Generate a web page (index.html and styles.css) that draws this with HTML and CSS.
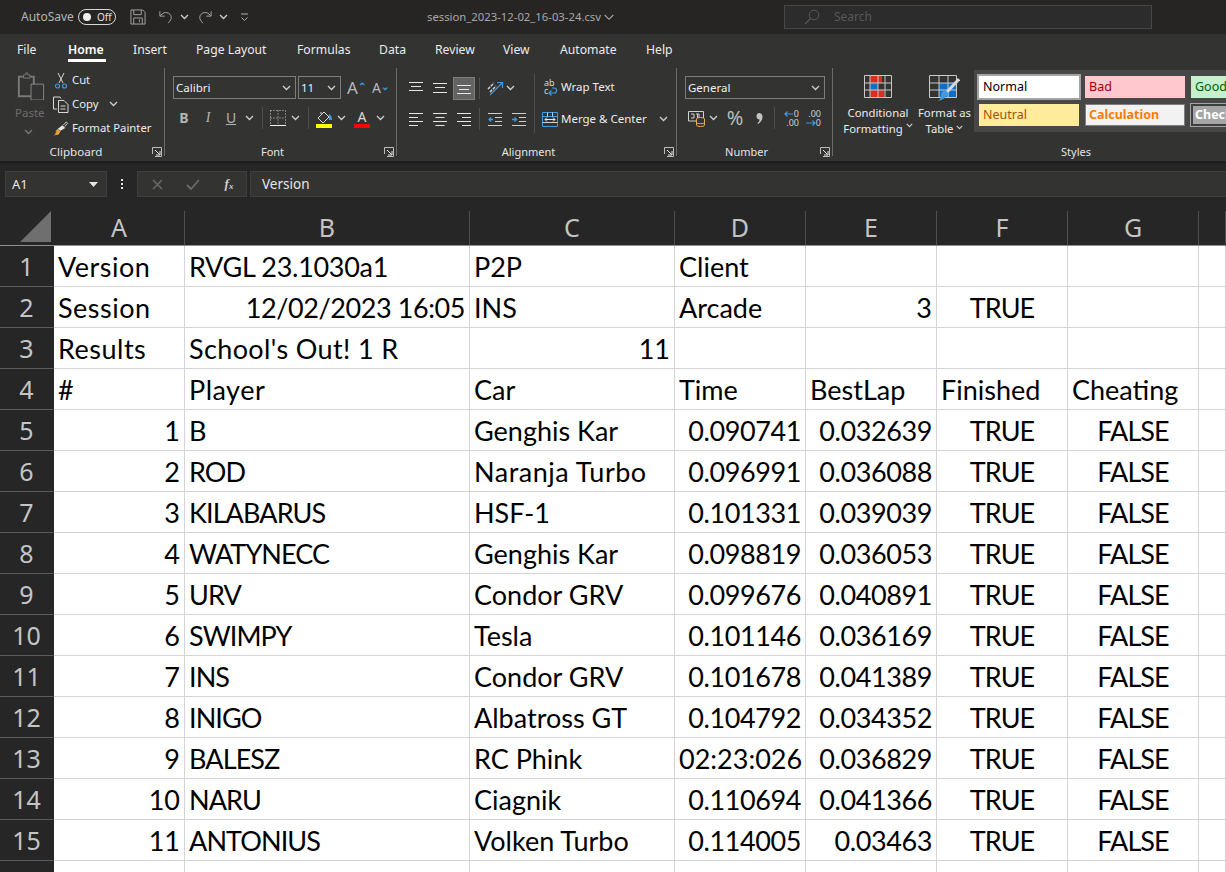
FILE: index.html
```html
<!DOCTYPE html>
<html lang="en">
<head>
<meta charset="utf-8">
<title>session_2023-12-02_16-03-24.csv - Excel</title>
<link rel="stylesheet" href="styles.css">
</head>
<body>
<svg class="defs" width="0" height="0" aria-hidden="true">
  <symbol id="chev" viewBox="0 0 9 6"><path d="M1 1l3.5 3.5L8 1" fill="none" stroke="#d0d0d0" stroke-width="1.3"/></symbol>
  <symbol id="launch" viewBox="0 0 10 10"><path d="M.5 7V.5H9.500V9.500H3" fill="none" stroke="#bdbdbd"/><path d="M3 3l4.500 4.500M8 4v4H4" fill="none" stroke="#e6e6e6"/></symbol>
</svg>
<header class="titlebar">
  <span class="autosave">AutoSave</span>
  <span class="toggle"><i class="knob"></i><span>Off</span></span>
  <svg class="t-save" width="16" height="16" viewBox="0 0 17 17"><path d="M1 1h12.500L16 3.500V16H1zM4 1v5h8V1M4 16V9.500h9V16M10 11v3" fill="none" stroke="#a8a8a8"/></svg>
  <svg class="t-undo" width="14" height="16" viewBox="0 0 16 17"><path d="M1 2v5.500h5.500M1.500 7C4 4 6.500 3 9 3.500c3 .6 5 3 5 5.500 0 2-1 3.500-3.500 6.500" fill="none" stroke="#a8a8a8" stroke-width="1.1"/></svg>
  <svg class="chev c-undo" width="9" height="6"><use href="#chev"/></svg>
  <svg class="t-redo" width="14" height="16" viewBox="0 0 16 17"><path d="M15 2v5.500H9.500M14.500 7C12 4 9.500 3 7 3.500 4 4.100 2 6.500 2 9c0 2 1 3.500 3.500 6.500" fill="none" stroke="#a8a8a8" stroke-width="1.1"/></svg>
  <svg class="chev c-redo" width="9" height="6"><use href="#chev"/></svg>
  <svg class="t-cust" width="9" height="9" viewBox="0 0 9 9"><path d="M1 1h7M1.500 4.500L4.500 7.500 7.500 4.500" fill="none" stroke="#b0b0b0"/></svg>
  <span class="doc">session_2023-12-02_16-03-24.csv</span>
  <svg class="c-doc" width="10" height="7" viewBox="0 0 10 7"><path d="M.7 1l4.300 4.300L9.300 1" fill="none" stroke="#a8a8a8" stroke-width="1.1"/></svg>
  <div class="search">
    <svg width="16" height="16" viewBox="0 0 16 16"><circle cx="10" cy="6" r="4.800" fill="none" stroke="#585858"/><path d="M6.500 9.500L1 15" stroke="#585858" stroke-width="1.2"/></svg>
    <span>Search</span>
  </div>
</header>

<nav class="tabs">
  <a class="t-file">File</a>
  <a class="t-home">Home</a>
  <a class="t-insert">Insert</a>
  <a class="t-page">Page Layout</a>
  <a class="t-form">Formulas</a>
  <a class="t-data">Data</a>
  <a class="t-rev">Review</a>
  <a class="t-view">View</a>
  <a class="t-auto">Automate</a>
  <a class="t-help">Help</a>
</nav>

<section class="ribbon">
  <div class="group g-clip">
    <div class="body clip-body">
      <div class="paste">
        <svg width="28" height="28" viewBox="0 0 28 30"><path d="M1 5h16v21H1z" fill="none" stroke="#7a7a7a" stroke-width="2"/><path d="M6 5V3h2.500V1h2v2H13v3.500H6z" fill="#333" stroke="#7a7a7a"/><path d="M14 13h13.500v17H14z" fill="#333" stroke="#8a8a8a"/></svg>
        <span>Paste</span>
        <svg class="chev dim" width="9" height="6"><use href="#chev"/></svg>
      </div>
      <div class="clip-rows">
        <div class="clip-row">
          <svg class="ci" width="16" height="17" viewBox="0 0 16 17"><path d="M5 1l5 10M11 1L6 11" stroke="#d8d8d8" fill="none"/><circle cx="4.500" cy="14" r="2" fill="none" stroke="#3f9ae0" stroke-width="1.200"/><circle cx="11.500" cy="14" r="2" fill="none" stroke="#3f9ae0" stroke-width="1.200"/></svg>
          <span>Cut</span>
        </div>
        <div class="clip-row">
          <svg class="ci" width="16" height="17" viewBox="0 0 16 17"><path d="M4 13H.500V1H7l1 1.500M5.500 4.500H11l4 4V16.500H5.500z" fill="none" stroke="#d8d8d8"/><path d="M7.500 10h5M7.500 13h5" stroke="#d8d8d8"/></svg>
          <span>Copy</span>
          <svg class="chev c-copy" width="9" height="6"><use href="#chev"/></svg>
        </div>
        <div class="clip-row">
          <svg class="ci" width="17" height="17" viewBox="0 0 17 17"><path d="M10 5l3 3-5 3-3-2z" fill="#e6e6e6"/><path d="M5 9l3 2.500-2 3.500-5 1 2-2-1-.5 2-1.500-1.500-.500z" fill="#e8a33c"/><path d="M11 5l3-3.500 1.500 1.500-3 3.500" fill="none" stroke="#d8d8d8"/></svg>
          <span>Format Painter</span>
        </div>
      </div>
    </div>
    <footer class="foot"><span></span><span>Clipboard</span><svg class="launch" width="10" height="10"><use href="#launch"/></svg></footer>
  </div>
  <i class="vsep"></i>

  <div class="group g-font">
    <div class="body font-body">
      <div class="font-r1">
        <div class="select s-font"><span>Calibri</span><svg class="chev" width="9" height="6"><use href="#chev"/></svg></div>
        <div class="select s-size"><span>11</span><svg class="chev" width="9" height="6"><use href="#chev"/></svg></div>
        <span class="grow">A<b>⌃</b></span>
        <span class="shrink">A<b>⌄</b></span>
      </div>
      <div class="font-r2">
        <b class="fb">B</b><i class="fi">I</i><u class="fu">U</u>
        <svg class="chev" width="9" height="6"><use href="#chev"/></svg>
        <i class="sep"></i>
        <svg width="16" height="16" viewBox="0 0 16 16"><path d="M.5 .5h15M.5 8h15M8 .5v15M.5 .5v15M15.500 .5v15" fill="none" stroke="#d0d0d0" stroke-dasharray="1 2"/><path d="M0 15.500h16" stroke="#f2f2f2"/></svg>
        <svg class="chev" width="9" height="6"><use href="#chev"/></svg>
        <i class="sep"></i>
        <span class="swatch">
          <svg width="17" height="13" viewBox="0 0 17 13"><path d="M8 1l-6 6 5 5 6-6z" fill="none" stroke="#d8d8d8"/><path d="M5 3V1" stroke="#d8d8d8"/><path d="M13 3c2 1 3 3 3 6h-3z" fill="#3f9ae0"/></svg>
          <i class="bar yellow"></i>
        </span>
        <svg class="chev" width="9" height="6"><use href="#chev"/></svg>
        <span class="swatch">
          <span class="fa">A</span>
          <i class="bar red"></i>
        </span>
        <svg class="chev" width="9" height="6"><use href="#chev"/></svg>
      </div>
    </div>
    <footer class="foot"><span></span><span>Font</span><svg class="launch" width="10" height="10"><use href="#launch"/></svg></footer>
  </div>
  <i class="vsep"></i>

  <div class="group g-align">
    <div class="body align-body">
      <div class="align-left">
        <div class="al-row">
          <svg class="lines" width="14" height="14" viewBox="0 0 14 14"><path d="M0 1.500h14M2 5.500h10M0 9.500h14"/></svg>
          <svg class="lines" width="14" height="14" viewBox="0 0 14 14"><path d="M0 2.500h14M2 6.500h10M0 11.500h14"/></svg>
          <span class="active"><svg class="lines" width="14" height="14" viewBox="0 0 14 14"><path d="M0 4.500h14M2 8.500h10M0 12.500h14"/></svg></span>
          <i class="sep"></i>
          <svg width="17" height="17" viewBox="0 0 17 17"><path d="M1 9l6-6M3 12l6-6" stroke="#cfcfcf" fill="none" stroke-width="1.500" stroke-dasharray="3 1"/><path d="M3 15L15 3M10 2.500h5.500V8" stroke="#3f9ae0" fill="none" stroke-width="1.200"/></svg>
          <svg class="chev" width="9" height="6"><use href="#chev"/></svg>
        </div>
        <div class="al-row">
          <svg class="lines" width="14" height="13" viewBox="0 0 14 13"><path d="M0 .5h14M0 4.500h9M0 8.500h14M0 12.500h9"/></svg>
          <svg class="lines" width="14" height="13" viewBox="0 0 14 13"><path d="M0 .5h14M2.500 4.500h9M0 8.500h14M2.500 12.500h9"/></svg>
          <svg class="lines" width="14" height="13" viewBox="0 0 14 13"><path d="M0 .5h14M5 4.500h9M0 8.500h14M5 12.500h9"/></svg>
          <i class="sep"></i>
          <svg width="14" height="13" viewBox="0 0 14 13"><path d="M0 .5h14M7 4.500h7M7 8.500h7M0 12.500h14" stroke="#cfcfcf" fill="none"/><path d="M5 6.500H.8M3 4.500L1 6.500l2 2" stroke="#3f9ae0" fill="none" stroke-width="1.300"/></svg>
          <svg width="14" height="13" viewBox="0 0 14 13"><path d="M0 .5h14M7 4.500h7M7 8.500h7M0 12.500h14" stroke="#cfcfcf" fill="none"/><path d="M0 6.500h4.500M2.500 4.500l2 2-2 2" stroke="#3f9ae0" fill="none" stroke-width="1.300"/></svg>
        </div>
      </div>
      <div class="align-right">
        <div class="wrap-row">
          <span class="abc">
            <span class="abc-top">ab</span>
            <span class="abc-bot">c</span>
            <svg width="10" height="9" viewBox="0 0 10 9"><path d="M1 6h5c3.500 0 3.500-5 0-5H4M3.500 3.500L1 6l2.500 2.500" stroke="#3f9ae0" fill="none" stroke-width="1.200"/></svg>
          </span>
          <span>Wrap Text</span>
        </div>
        <div class="merge-row">
          <svg width="16" height="15" viewBox="0 0 16 15"><path d="M.5 .5h15v14H.5zM.5 4.500h15" fill="none" stroke="#3f9ae0"/><path d="M5.500 .5v4M10.500 .5v4M.5 10.500h15" fill="none" stroke="#cfcfcf"/><path d="M3 7.500h10M5 5.500l-2 2 2 2M11 5.500l2 2-2 2" fill="none" stroke="#e6e6e6"/></svg>
          <span>Merge &amp; Center</span>
          <svg class="chev" width="9" height="6"><use href="#chev"/></svg>
        </div>
      </div>
    </div>
    <footer class="foot"><span></span><span>Alignment</span><svg class="launch" width="10" height="10"><use href="#launch"/></svg></footer>
  </div>
  <i class="vsep"></i>

  <div class="group g-num">
    <div class="body num-body">
      <div class="select s-num"><span>General</span><svg class="chev" width="9" height="6"><use href="#chev"/></svg></div>
      <div class="num-r2">
        <svg width="17" height="17" viewBox="0 0 17 17"><path d="M.5 1.500h15v9.500H.5z" fill="none" stroke="#d0d0d0"/><path d="M3 4h3v4H3M8 4h3v4M9.500 4v4" fill="none" stroke="#d0d0d0"/><ellipse cx="12.500" cy="9" rx="4" ry="1.500" fill="#333" stroke="#e8b04a"/><path d="M8.500 9v6c0 2 8 2 8 0V9M8.500 12.500c0 1.500 8 1.500 8 0" fill="#333" stroke="#e8b04a"/></svg>
        <svg class="chev" width="9" height="6"><use href="#chev"/></svg>
        <span class="pct">%</span>
        <svg width="7" height="13" viewBox="0 0 7 13"><path d="M3 1c2 0 3.500 1.500 3.500 4 0 3-2 5.500-4.500 7l-.5-1c1.500-1 2-2 2-3.500C2 7.500.5 6.500.5 4.500.5 2.500 1.500 1 3 1z" fill="#c4c4c4"/></svg>
        <i class="sep"></i>
        <span class="dec">
          <span class="dr"><svg width="10" height="8" viewBox="0 0 10 8"><path d="M9 4H1M3.500 1.500L1 4l2.500 2.500" fill="none" stroke="#3f9ae0" stroke-width="1.200"/></svg><span>0</span></span>
          <span class="dr">.00</span>
        </span>
        <span class="dec">
          <span class="dr">.00</span>
          <span class="dr"><svg width="10" height="8" viewBox="0 0 10 8"><path d="M0 4h9M6.500 1.500L9 4 6.500 6.500" fill="none" stroke="#3f9ae0" stroke-width="1.200"/></svg><span>0</span></span>
        </span>
      </div>
    </div>
    <footer class="foot"><span></span><span>Number</span><svg class="launch" width="10" height="10"><use href="#launch"/></svg></footer>
  </div>
  <i class="vsep"></i>

  <div class="group g-styles">
    <div class="body styles-body">
      <div class="big b-cond">
        <svg width="28" height="23" viewBox="0 0 28 23"><path d="M6 1h12v7H6zM6 15h14v7H6z" fill="#e02b20"/><path d="M6 8h8v7H6z" fill="#0f6fc6"/><path d="M.5 .5h27v22H.5zM.5 8h27M.5 15h27M6 .5v22M14 .5v22M21 .5v22" fill="none" stroke="#c9c9c9"/></svg>
        <span>Conditional</span>
        <span>Formatting <svg class="chev" width="9" height="6"><use href="#chev"/></svg></span>
      </div>
      <div class="big b-table">
        <svg width="31" height="27" viewBox="0 0 31 27"><path d="M10 8h18v14H10z" fill="#0f6fc6"/><path d="M.5 .5h27v22H.5zM.5 8h27M.5 15h27M10 .5v22M19 .5v22" fill="none" stroke="#c9c9c9"/><path d="M30 4L18 17" stroke="#d8d8d8" stroke-width="3"/><path d="M16 15l3 3c-1 4-5 7-10 8 2-1 3-3 3-6 0-3 2-4 4-5z" fill="#3f9ae0"/></svg>
        <span>Format as</span>
        <span>Table <svg class="chev" width="9" height="6"><use href="#chev"/></svg></span>
      </div>
      <div class="gallery">
        <span class="st st-normal">Normal</span>
        <span class="st st-bad">Bad</span>
        <span class="st st-good">Good</span>
        <span class="st st-neutral">Neutral</span>
        <span class="st st-calc">Calculation</span>
        <span class="st st-check">Check Cell</span>
      </div>
    </div>
    <footer class="foot foot-styles">Styles</footer>
  </div>
</section>

<section class="formula">
  <div class="namebox"><span>A1</span><svg width="9" height="5" viewBox="0 0 9 5"><path d="M0 0h9L4.500 5z" fill="#e6e6e6"/></svg></div>
  <div class="dots"><i></i><i></i><i></i></div>
  <div class="fx-btns">
    <svg width="11" height="11" viewBox="0 0 11 11"><path d="M1 1l9 9M10 1l-9 9" stroke="#6a6a6a" stroke-width="1.500"/></svg>
    <svg width="14" height="11" viewBox="0 0 14 11"><path d="M1 6l4 4 8-9" fill="none" stroke="#6a6a6a" stroke-width="1.800"/></svg>
    <span class="fx">f<sub>x</sub></span>
  </div>
  <div class="fx-input">Version</div>
</section>

<main class="sheet-wrap">
<table class="sheet">
  <colgroup><col class="c0"><col class="c1"><col class="c2"><col class="c3"><col class="c1"><col class="c1"><col class="c1"><col class="c1"><col class="c8"></colgroup>
  <thead>
    <tr>
      <th class="corner"><svg width="31" height="31" viewBox="0 0 31 31"><path d="M31 0v31H0z" fill="#6f6f6f"/></svg></th>
      <th>A</th><th>B</th><th>C</th><th>D</th><th>E</th><th>F</th><th>G</th><th></th>
    </tr>
  </thead>
  <tbody>
    <tr><th>1</th><td class="w">Version</td><td class="m">RVGL 23.1030a1</td><td>P2P</td><td>Client</td><td></td><td></td><td></td><td></td></tr>
    <tr><th>2</th><td class="w">Session</td><td class="r n">12/02/2023 16:05</td><td>INS</td><td>Arcade</td><td class="r">3</td><td class="c u">TRUE</td><td></td><td></td></tr>
    <tr><th>3</th><td class="w">Results</td><td class="s">School's Out! 1 R</td><td class="r">11</td><td></td><td></td><td></td><td></td><td></td></tr>
    <tr><th>4</th><td>#</td><td class="w">Player</td><td>Car</td><td>Time</td><td>BestLap</td><td>Finished</td><td>Cheating</td><td></td></tr>
    <tr><th>5</th><td class="r">1</td><td>B</td><td>Genghis Kar</td><td class="r n">0.090741</td><td class="r n">0.032639</td><td class="c u">TRUE</td><td class="c u">FALSE</td><td></td></tr>
    <tr><th>6</th><td class="r">2</td><td class="u">ROD</td><td class="w">Naranja Turbo</td><td class="r n">0.096991</td><td class="r n">0.036088</td><td class="c u">TRUE</td><td class="c u">FALSE</td><td></td></tr>
    <tr><th>7</th><td class="r">3</td><td class="u">KILABARUS</td><td>HSF-1</td><td class="r n">0.101331</td><td class="r n">0.039039</td><td class="c u">TRUE</td><td class="c u">FALSE</td><td></td></tr>
    <tr><th>8</th><td class="r">4</td><td class="u">WATYNECC</td><td>Genghis Kar</td><td class="r n">0.098819</td><td class="r n">0.036053</td><td class="c u">TRUE</td><td class="c u">FALSE</td><td></td></tr>
    <tr><th>9</th><td class="r">5</td><td class="u">URV</td><td>Condor GRV</td><td class="r n">0.099676</td><td class="r n">0.040891</td><td class="c u">TRUE</td><td class="c u">FALSE</td><td></td></tr>
    <tr><th>10</th><td class="r">6</td><td class="u">SWIMPY</td><td>Tesla</td><td class="r n">0.101146</td><td class="r n">0.036169</td><td class="c u">TRUE</td><td class="c u">FALSE</td><td></td></tr>
    <tr><th>11</th><td class="r">7</td><td class="u">INS</td><td>Condor GRV</td><td class="r n">0.101678</td><td class="r n">0.041389</td><td class="c u">TRUE</td><td class="c u">FALSE</td><td></td></tr>
    <tr><th>12</th><td class="r">8</td><td class="u">INIGO</td><td>Albatross GT</td><td class="r n">0.104792</td><td class="r n">0.034352</td><td class="c u">TRUE</td><td class="c u">FALSE</td><td></td></tr>
    <tr><th>13</th><td class="r">9</td><td class="u">BALESZ</td><td>RC Phink</td><td class="r">02:23:026</td><td class="r n">0.036829</td><td class="c u">TRUE</td><td class="c u">FALSE</td><td></td></tr>
    <tr><th>14</th><td class="r">10</td><td class="u">NARU</td><td>Ciagnik</td><td class="r n">0.110694</td><td class="r n">0.041366</td><td class="c u">TRUE</td><td class="c u">FALSE</td><td></td></tr>
    <tr><th>15</th><td class="r">11</td><td class="u">ANTONIUS</td><td>Volken Turbo</td><td class="r n">0.114005</td><td class="r n">0.03463</td><td class="c u">TRUE</td><td class="c u">FALSE</td><td></td></tr>
    <tr><th></th><td></td><td></td><td></td><td></td><td></td><td></td><td></td><td></td></tr>
  </tbody>
</table>
</main>
</body>
</html>
```
FILE: styles.css
```css
* { box-sizing: border-box; }
html, body { margin: 0; height: 872px; overflow: hidden; }
body { width: 1226px; background: #262626; color: #f0f0f0; font: 12px/16px "Noto Sans", "Open Sans", sans-serif; }
.defs { display: block; height: 0; }
svg { display: block; flex: none; }
i, b, u { font-style: normal; }

/* title bar */
.titlebar { height: 34px; background: #262524; display: flex; align-items: center; padding-left: 21px; color: #b4b4b4; }
.autosave { width: 57px; font-size: 12px; }
.toggle { width: 38px; height: 16px; border: 1px solid #d8d8d8; border-radius: 8px; display: flex; align-items: center; font-size: 10px; color: #e0e0e0; padding-left: 4px; gap: 6px; }
.knob { width: 8px; height: 8px; border-radius: 50%; background: #f0f0f0; }
.t-save { margin-left: 14px; }
.t-undo { margin-left: 13px; }
.c-undo { margin-left: 7px; }
.t-redo { margin-left: 9px; }
.c-redo { margin-left: 7px; }
.t-cust { margin-left: 12px; }
.doc { margin-left: 178px; font-size: 11.300px; color: #a8a8a8; width: 177px; white-space: nowrap; }
.search { margin-left: 170px; width: 368px; height: 24px; border: 1px solid #474747; background: #2c2c2c; display: flex; align-items: center; padding-left: 19px; gap: 14px; color: #585858; }

/* tabs */
.tabs { height: 34px; background: #333332; display: flex; font-size: 12.200px; line-height: 32px; color: #ececec; }
.tabs a { display: block; white-space: nowrap; height: 28px; }
.t-file { margin-left: 17px; width: 51px; }
.t-home { width: 38px; font-weight: 600; color: #fff; border-bottom: 3px solid #fff; }
.t-insert { margin-left: 27px; width: 63px; }
.t-page { width: 101px; }
.t-form { width: 82px; }
.t-data { width: 56px; }
.t-rev { width: 68px; }
.t-view { width: 57px; }
.t-auto { width: 86px; }

/* ribbon */
.ribbon { height: 93px; background: #333332; display: flex; align-items: flex-start; box-shadow: 0 2px 2px #1d1d1d; position: relative; }
.group { height: 93px; display: flex; flex-direction: column; font-size: 11.300px; line-height: 16px; color: #ececec; flex: none; }
.g-clip { width: 164px; }
.g-font { width: 231px; }
.g-align { width: 279px; }
.g-num { width: 155px; }
.g-styles { width: 393px; overflow: hidden; }
.vsep { width: 1px; height: 88px; background: #6b6b6b; flex: none; }
.body { height: 76px; display: flex; }
.foot { height: 16px; padding-right: 16px; display: grid; grid-template-columns: 1fr auto 1fr; align-items: center; font-size: 11px; color: #e4e4e4; white-space: nowrap; }
.foot .launch { justify-self: end; margin-right: -14px; }
.g-clip .foot { padding-right: 12px; font-size: 11.600px; }
.g-clip .foot .launch { margin-right: -10px; }
.foot-styles { display: block; text-align: center; padding: 0 0 0 93px; }
.sep { display: block; width: 1px; height: 22px; background: #4e4e4e; }
.dim { opacity: .45; }

/* clipboard */
.clip-body { padding-left: 15px; }
.paste { width: 36px; display: flex; flex-direction: column; align-items: flex-start; padding-top: 4px; color: #6e6e6e; font-size: 11.500px; }
.paste svg:first-child { margin-left: 2px; }
.paste span { margin-top: 5px; }
.paste .chev { margin: 8px 0 0 9px; }
.clip-row { height: 24px; display: flex; align-items: center; white-space: nowrap; padding-left: 2px; gap: 3px; }
.clip-row .ci { width: 16px; }
.c-copy { margin-left: 8px; }

/* font */
.font-body { flex-direction: column; padding: 8px 0 0 8px; }
.font-r1 { display: flex; align-items: center; height: 23px; }
.select { height: 23px; border: 1px solid #7c7c7c; background: #333332; display: flex; align-items: center; justify-content: space-between; padding: 0 4px 0 2px; color: #f0f0f0; font-size: 11.500px; }
.s-font { width: 123px; }
.s-size { width: 43px; margin-left: 2px; }
.grow, .shrink { color: #b8b8b8; font-size: 17px; display: flex; }
.grow { margin-left: 6px; width: 25px; }
.shrink { width: 15px; font-size: 14px; }
.grow b, .shrink b { color: #3f9ae0; font-size: 10px; line-height: 12px; height: 10px; }
.font-r2 { margin-top: 7px; height: 24px; display: grid; grid-template-columns: 22px 26px 20px 16px 10px 22px 12px 14px 18px 16px 26px 10px; align-items: center; justify-items: center; }
.fb { font-weight: 700; font-size: 14px; color: #b4b4b4; }
.fi { font-style: italic; font-size: 14px; color: #b4b4b4; font-family: "Liberation Serif", serif; }
.fu { font-size: 14px; color: #b4b4b4; }
.swatch { display: flex; flex-direction: column; align-items: center; height: 20px; justify-content: flex-end; }
.bar { display: block; width: 16px; height: 4px; }
.yellow { background: #ffff00; }
.red { background: #ff0000; }
.fa { font-size: 14px; line-height: 15px; color: #d8d8d8; }

/* alignment */
.align-body { padding-left: 7px; }
.align-left { width: 130px; padding-top: 8px; }
.al-row { display: grid; grid-template-columns: 24px 24px 24px 6px 26px 4px; height: 24px; align-items: center; justify-items: center; }
.al-row + .al-row { margin-top: 7px; grid-template-columns: 24px 24px 24px 6px 26px 22px; }
.lines { fill: none; stroke: #e6e6e6; }
.active { width: 22px; height: 23px; background: #636363; border: 1px solid #7d7d7d; display: flex; align-items: center; justify-content: center; }
.align-right { margin-top: 6px; height: 59px; border-left: 1px solid #4e4e4e; width: 142px; font-size: 11.500px; white-space: nowrap; }
.wrap-row { height: 26px; display: flex; align-items: center; padding-left: 9px; gap: 2px; }
.abc { width: 15px; height: 16px; display: grid; grid-template-columns: 6px 9px; grid-template-rows: 8px 8px; font-size: 9px; line-height: 8px; color: #d8d8d8; }
.abc-top { grid-column: 1 / 3; grid-row: 1; }
.abc-bot { grid-column: 1; grid-row: 2; }
.abc svg { grid-column: 2; grid-row: 2; margin-left: -2px; }
.merge-row { height: 30px; margin-top: 4px; display: flex; align-items: center; padding-left: 7px; gap: 3px; }
.merge-row .chev { margin-left: 9px; }

/* number */
.num-body { flex-direction: column; padding: 8px 0 0 8px; }
.s-num { width: 140px; }
.num-r2 { margin-top: 7px; height: 24px; display: grid; grid-template-columns: 22px 12px 32px 16px 14px 20px 24px; align-items: center; justify-items: center; }
.pct { font-size: 20px; color: #bdbdbd; line-height: 20px; }
.dec { display: flex; flex-direction: column; align-items: flex-end; width: 16px; font-size: 9px; line-height: 9px; color: #cfcfcf; }
.dr { display: flex; align-items: center; height: 9px; }

/* styles */
.styles-body { height: 76px; }
.big { display: flex; flex-direction: column; align-items: center; font-size: 11.300px; line-height: 16px; white-space: nowrap; }
.big span { display: flex; align-items: center; gap: 3px; }
.big .chev { width: 7px; height: 5px; }
.b-cond { width: 84px; padding: 7px 0 0 6px; }
.b-cond svg:first-child { margin-bottom: 7px; }
.b-table { width: 55px; padding-top: 7px; }
.b-table svg:first-child { margin-bottom: 3px; }
.gallery { margin: 2px 0 0 2px; width: 252px; height: 62px; background: #474747; display: grid; grid-template-columns: 100px 100px 100px; grid-template-rows: 22px 22px; gap: 6px; padding: 6px 0 0 5px; flex: none; }
.st { display: flex; align-items: center; padding-left: 4px; font-size: 12.500px; color: #000; white-space: nowrap; overflow: hidden; }
.st-normal { background: #fff; outline: 2px solid #a3a3a3; }
.st-bad { background: #ffc7ce; color: #9c0006; }
.st-good { background: #c6efce; color: #006100; }
.st-neutral { background: #ffeb9c; color: #9c5700; }
.st-calc { background: #f2f2f2; color: #fa7d00; font-weight: 700; border: 1px solid #7f7f7f; padding-left: 3px; }
.st-check { background: #a5a5a5; color: #fff; font-weight: 700; border: 2px double #3f3f3f; outline: 1px solid #a5a5a5; padding-left: 2px; }

/* formula bar */
.formula { margin-top: 10px; height: 26px; display: flex; padding-left: 5px; }
.namebox { width: 102px; background: #333332; border: 1px solid #3f3f3f; display: flex; align-items: center; justify-content: space-between; padding: 0 8px 0 6px; font-size: 13px; color: #e8e8e8; }
.dots { width: 30px; display: flex; flex-direction: column; align-items: center; justify-content: center; gap: 2px; }
.dots i { width: 2px; height: 2px; background: #e6e6e6; }
.fx-btns { width: 110px; background: #333332; border: 1px solid #3f3f3f; display: grid; grid-template-columns: 36px 36px 36px; align-items: center; justify-items: center; padding-left: 1px; }
.fx { font-family: "Liberation Serif", serif; font-style: italic; font-weight: 700; font-size: 13px; color: #cfcfcf; }
.fx sub { font-size: 9px; vertical-align: -1px; line-height: 0; }
.fx-input { margin-left: 3px; flex: 1; background: #333332; border: 1px solid #3f3f3f; border-right: 0; padding-left: 11px; font-size: 13.500px; line-height: 25px; color: #e8e8e8; }

/* sheet */
.sheet-wrap { margin-top: 14px; }
.sheet { width: 1226px; table-layout: fixed; border-collapse: separate; border-spacing: 0; }
.c0 { width: 54px; }
.c1 { width: 131px; }
.c2 { width: 285px; }
.c3 { width: 205px; }
.c8 { width: 27px; }
thead th { height: 35px; padding: 0 0 3px; background: #262626; border-right: 1px solid #4f4f4f; border-bottom: 1px solid #8e8e8e; color: #c4c4c4; font: 400 25px/30px "Noto Sans", "Open Sans", sans-serif; text-align: center; }
thead .corner { padding: 0 0 3px 20px; border-right: 0; vertical-align: bottom; }
tbody tr { height: 41px; }
tbody th { background: #262626; border-bottom: 1px solid #5c5c5c; border-right: 1px solid #262626; color: #c4c4c4; font: 400 25px/30px "Noto Sans", "Open Sans", sans-serif; text-align: center; padding: 0; }
td { background: #fff; border-right: 1px solid #d4d4d4; border-bottom: 1px solid #d4d4d4; color: #000; font: 400 27px/36px Lato, "Liberation Sans", sans-serif; padding: 1px 4px 0 4px; white-space: nowrap; overflow: hidden; text-align: left; vertical-align: middle; height: 41px; }
td.r { text-align: right; }
td.c { text-align: center; }
td.w { letter-spacing: .5px; }
td.s { letter-spacing: .37px; }
td.m { letter-spacing: -.3px; }
td.u { letter-spacing: -.9px; }
td.n { letter-spacing: -.42px; }
```
